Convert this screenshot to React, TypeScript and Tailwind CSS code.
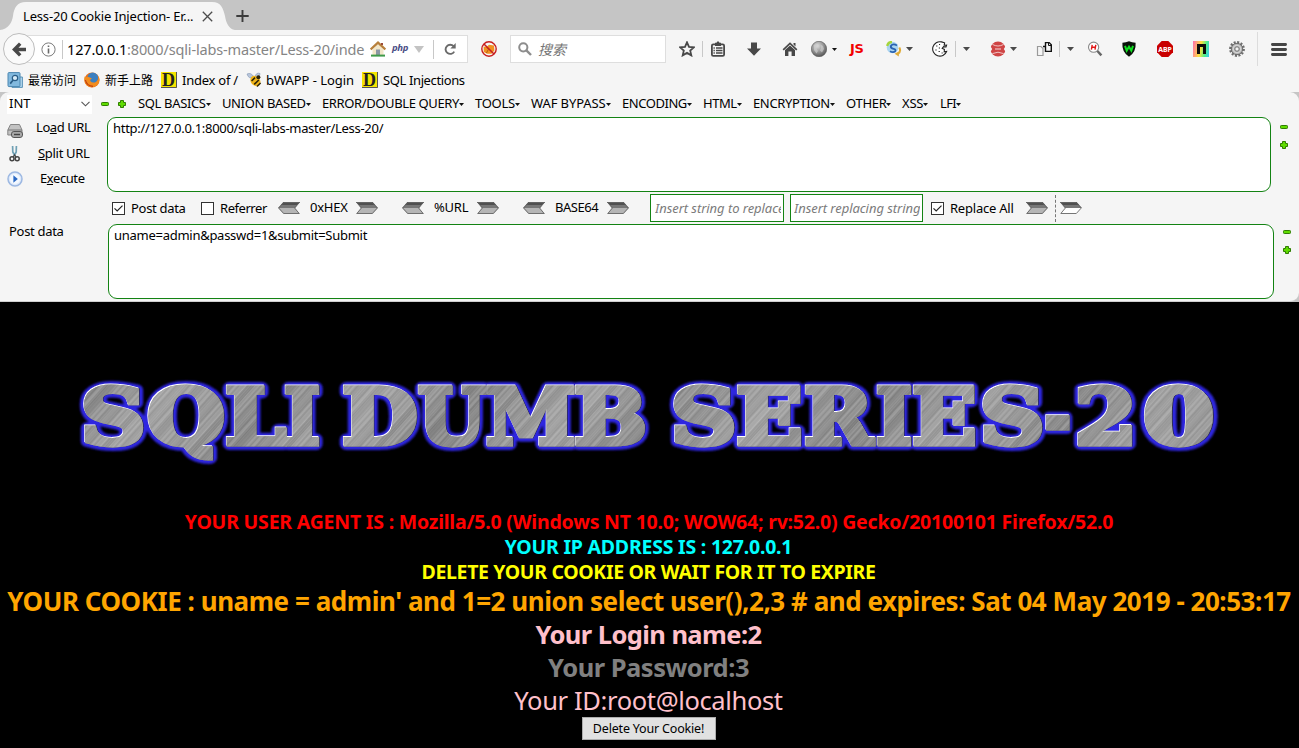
import React from "react";

const Caret = ({ className = "" }: { className?: string }) => (
  <svg className={`h-[4px] w-[7px] shrink-0 ${className}`} viewBox="0 0 7 4">
    <path d="M0 0H7L3.5 4Z" fill="#4a4a4a" />
  </svg>
);

const Sep = ({ className = "" }: { className?: string }) => <div className={`h-4 w-px shrink-0 bg-[#c8c8c8] ${className}`} />;

const Icon = ({ className = "", children }: { className?: string; children: React.ReactNode }) => (
  <svg className={`h-4 w-4 shrink-0 ${className}`} viewBox="0 0 16 16" fill="none">
    {children}
  </svg>
);

const Minus = ({ className = "" }: { className?: string }) => (
  <svg className={`h-2 w-2 shrink-0 ${className}`} viewBox="0 0 8 8">
    <rect x=".5" y="2.5" width="7" height="3" rx=".8" fill="#5fdc00" stroke="#2f7d00" />
  </svg>
);

const Plus = ({ className = "" }: { className?: string }) => (
  <svg className={`h-2 w-2 shrink-0 ${className}`} viewBox="0 0 8 8">
    <path d="M2.5 .5h3v2h2v3h-2v2h-3v-2h-2v-3h2Z" fill="#5fdc00" stroke="#2f7d00" strokeLinejoin="round" />
  </svg>
);

const Arrow = ({ className = "", flip = false, hollow = false }: { className?: string; flip?: boolean; hollow?: boolean }) => (
  <svg className={`h-[12px] w-[22px] shrink-0 ${flip ? "-scale-x-100" : ""} ${className}`} viewBox="0 0 22 12">
    <path d="M0 0H16.5L22 6L16.5 12H0L5 6Z" fill={hollow ? "#fff" : "#b5b5b5"} />
    <path d="M0 0H16.5L22 6H5Z" fill="#777" />
    <path d="M0 0H16.5L19.2 3H2.5Z" fill="#505050" />
    <path d="M.8 .5H16.3L21.3 6L16.3 11.5H.8L5.4 6Z" fill="none" stroke="#666" strokeWidth=".9" />
  </svg>
);

const Check = ({ on = false, className = "" }: { on?: boolean; className?: string }) => (
  <svg className={`h-[13px] w-[13px] shrink-0 ${className}`} viewBox="0 0 13 13">
    <rect x=".5" y=".5" width="12" height="12" fill="#fff" stroke="#333" />
    {on && <path d="M2.5 6.3L5.2 9L10.5 3.6" fill="none" stroke="#222" strokeWidth="1.2" />}
  </svg>
);

const BookmarkD = () => (
  <Icon>
    <rect width="16" height="16" fill="#f5e400" />
    <path d="M15.5 0V15.5H0" stroke="#555" />
    <text x="1" y="14" fontSize="18" fontWeight="700" fill="#222" fontFamily="Liberation Serif, serif">D</text>
  </Icon>
);

const menus: [string, string][] = [
  ["SQL BASICS", "w-[84px] tracking-[-0.35px]"],
  ["UNION BASED", "w-[100px] tracking-[-0.38px]"],
  ["ERROR/DOUBLE QUERY", "w-[153px] tracking-[-0.38px]"],
  ["TOOLS", "w-[56px] tracking-[-0.28px]"],
  ["WAF BYPASS", "w-[91px] tracking-[-0.1px]"],
  ["ENCODING", "w-[81px] tracking-[-0.45px]"],
  ["HTML", "w-[50px] tracking-[-0.45px]"],
  ["ENCRYPTION", "w-[93px] tracking-[-0.36px]"],
  ["OTHER", "w-[56px] tracking-[-0.3px]"],
  ["XSS", "w-[38px] tracking-[-0.2px]"],
  ["LFI", "w-[30px] tracking-[-0.6px]"],
];

function TabBar() {
  return (
    <div className="flex h-[30px] bg-[#c5c5c5]">
      <div className="relative flex h-[30px] w-[235px] items-center">
        <svg className="absolute inset-0 h-[30px] w-[235px]" viewBox="0 0 235 30">
          <path d="M0 30C8 29 12 23 13 16C14 8 17 2 26 2H212C221 2 223 8 225 16C226 23 229 29 235 30Z" fill="#f5f5f5" />
        </svg>
        <span className="relative ml-[23px] w-[179px] pt-px tracking-[-0.18px]">Less-20 Cookie Injection- Er...</span>
        <svg className="relative mt-[2px] h-[11px] w-[11px]" viewBox="0 0 11 11">
          <path d="M.8 .8L10.2 10.2M10.2 .8L.8 10.2" stroke="#4c4c4c" strokeWidth="1.3" />
        </svg>
      </div>
      <svg className="ml-px mt-[10px] h-3 w-[13px]" viewBox="0 0 13 12">
        <path d="M6.5 0V12M.3 6H12.7" stroke="#3c3c3c" strokeWidth="1.9" />
      </svg>
    </div>
  );
}

function NavBar() {
  return (
    <div className="flex h-[38px] items-center">
      <div className="z-10 ml-[3px] flex h-8 w-8 shrink-0 items-center justify-center rounded-full border border-[#bdbdbd] bg-[#fafafa]">
        <svg className="h-[15px] w-[15px]" viewBox="0 0 15 15">
          <path d="M8.2 1.6L2.4 7.5L8.2 13.4M2.8 7.5H14" fill="none" stroke="#484848" strokeWidth="3.4" />
        </svg>
      </div>
      <div className="ml-[-17px] flex h-[28px] w-[450px] items-center border border-[#dedede] bg-white pl-[22px]">
        <svg className="h-[15px] w-[15px] shrink-0" viewBox="0 0 15 15" fill="none">
          <circle cx="7.5" cy="7.5" r="6.6" stroke="#7b7b7b" />
          <path d="M7.5 6.5V11.5M7.5 3.4V5" stroke="#6a6a6a" strokeWidth="1.6" />
        </svg>
        <Sep className="ml-[6px] h-[19px]" />
        <div className="ml-[4px] w-[303px] shrink-0 whitespace-pre text-[14.5px] tracking-[-0.15px] text-[#858585]">
          <span className="text-black">127.0.0.1</span>:8000/sqli-labs-master/Less-20/inde
        </div>
        <Icon>
          <path d="M2.5 8.5L8 3L13.5 8.5V14.5H2.5Z" fill="#f2e6c8" />
          <path d="M.6 8.4L8 1.6L15.4 8.4" stroke="#b8803c" strokeWidth="2.3" />
          <path d="M12 2V4" stroke="#9a4a3a" strokeWidth="2" />
          <rect x="6" y="8.5" width="4" height="6" fill="#8c97a4" />
          <path d="M1 14.6H15" stroke="#3f9a4a" strokeWidth="2" />
        </Icon>
        <span className="ml-[6px] w-[17px] pb-[2px] text-[9.5px] font-bold italic leading-none tracking-[-0.3px] text-[#4b4f86]">php</span>
        <svg className="ml-[5px] h-[7px] w-[10px]" viewBox="0 0 10 7"><path d="M0 0H10L5 7Z" fill="#c3c3c3" /></svg>
        <Sep className="ml-[9px] h-[19px]" />
        <svg className="ml-[10px] h-3 w-3" viewBox="0 0 12 12" fill="none">
          <path d="M9.6 3.2A4.6 4.6 0 1 0 10.2 8.6" stroke="#6a6a6a" strokeWidth="1.9" />
          <path d="M11.7 0V5.4H6.4Z" fill="#6a6a6a" />
        </svg>
      </div>
      <Icon className="ml-[13px]">
        <path d="M2.6 5.5L5.5 6L8 3.8L13 4.4L13.4 9.5L10.5 12.8H6L2.8 11Z" fill="#f09020" />
        <path d="M5 5L7.5 8.2L5.4 12" stroke="#b45c10" />
        <circle cx="8" cy="8" r="7.2" stroke="#c81e1e" strokeWidth="1.4" />
        <path d="M3 3L13 13" stroke="#c81e1e" strokeWidth="1.5" />
      </Icon>
      <div className="ml-[13px] flex h-[28px] w-[156px] shrink-0 items-center border border-[#dedede] bg-white pl-[7px]">
        <svg className="h-[14px] w-[14px]" viewBox="0 0 14 14" fill="none">
          <circle cx="5.3" cy="5.3" r="4.1" stroke="#8d8d8d" strokeWidth="2" />
          <path d="M8.4 8.4L13 13" stroke="#8d8d8d" strokeWidth="2.4" />
        </svg>
        <span className="ml-[6px] pt-[2px] text-[14px] italic text-[#757575]">搜索</span>
      </div>
      <Icon className="ml-[13px]">
        <path d="M8 1.3L10 5.8L14.9 6.3L11.2 9.6L12.3 14.4L8 11.9L3.7 14.4L4.8 9.6L1.1 6.3L6 5.8Z" stroke="#484848" strokeWidth="1.8" />
      </Icon>
      <Sep className="ml-[7px]" />
      <Icon className="ml-[7px]">
        <rect x="1.9" y="3.3" width="12.2" height="11.6" rx="1.4" stroke="#484848" strokeWidth="1.8" />
        <path d="M5 1.8H6.4L8 0L9.6 1.8H11V5H5Z" fill="#484848" />
        <path d="M3.5 7H4.8M6 7H12.5M3.5 9.5H4.8M6 9.5H12.5M3.5 12H4.8M6 12H12.5" stroke="#484848" strokeWidth="1.3" />
      </Icon>
      <Icon className="ml-5"><path d="M5 1.5H11V7.5H15L8 14.7L1 7.5H5Z" fill="#484848" /></Icon>
      <Icon className="ml-5">
        <path d="M.6 8.2L8 1.2L15.4 8.2L14.2 9.4L8 3.6L1.8 9.4Z" fill="#484848" />
        <path d="M3 9L8 4.5L13 9V15H9.6V10.5H6.4V15H3ZM11.5 2H13.5V5.5L11.5 3.6Z" fill="#484848" />
      </Icon>
      <Icon className="ml-[13px]">
        <defs>
          <radialGradient id="globe" cx=".4" cy=".3" r=".75"><stop stopColor="#dedede" /><stop offset="1" stopColor="#505050" /></radialGradient>
        </defs>
        <circle cx="8" cy="8" r="7.7" fill="url(#globe)" stroke="#555" strokeWidth=".6" />
        <path d="M3 4L6 3L7.5 5L5.5 7.5L7 10L5.5 12.5L3 9ZM9.5 3.5L12 5L13 8L11 11.5L9 9.5L10 7Z" fill="#d0d0d0" opacity=".65" />
      </Icon>
      <svg className="ml-[5px] h-[3px] w-[5px]" viewBox="0 0 5 3"><path d="M0 0H5L2.5 3Z" fill="#111" /></svg>
      <span className="ml-[13px] w-[16px] pb-px text-[13px] font-extrabold leading-none text-[#f20000] [font-family:'DejaVu_Sans',sans-serif] tracking-[-0.4px]">JS</span>
      <Icon className="ml-5">
        <circle cx="6.5" cy="6.5" r="5.8" fill="#a9d4f0" />
        <path d="M1.2 5Q2 1 6 1" stroke="#a4d43c" strokeWidth="2.4" />
        <path d="M11 4.5Q7 2 4.8 5Q4.5 7.4 7.6 7.8Q10.5 8.4 9 10.6Q7 12 4 10.2" stroke="#2a62b0" strokeWidth="1.8" />
        <path d="M13.3 6.5Q15.5 10.5 11.8 13" stroke="#e0ac38" strokeWidth="2" />
        <path d="M8.6 12.8L12.8 10.4V15.4Z" fill="#e0ac38" />
      </Icon>
      <Caret className="ml-1" />
      <Icon className="ml-[19px]">
        <path d="M9.5 .9A7.2 7.2 0 1 0 14.6 10.5L12.2 10.8L12.4 8.4L10.2 7.4L11.6 5.6L14 6L14.6 4L12.2 4.2L12.6 1.8Z" fill="#fff" stroke="#222" strokeWidth="1.1" />
        <path d="M4.2 5h1.2M7 3.5h1.1M6.8 7h1.2M3.4 9h1.2M6.6 10.5h1.2M9.6 12h1.1" stroke="#222" strokeWidth="1.2" />
      </Icon>
      <Sep className="ml-[7px]" />
      <Caret className="ml-[7px]" />
      <Icon className="ml-5">
        <circle cx="8" cy="8" r="7.6" fill="#cf4545" />
        <path d="M2.4 3.4Q8 6.6 13.6 3.4M2.4 12.6Q8 9.8 13.6 12.6" stroke="#f0c4c4" />
        <path d="M5 8H11" stroke="#f6dada" />
        <path d="M0 4.5L2.2 8L0 11.5ZM16 4.5L13.8 8L16 11.5Z" fill="#f5f5f5" />
      </Icon>
      <Caret className="ml-1" />
      <Icon className="ml-[19px]">
        <path d="M1.5 5.5H5L7 7.5V14.5H1.5Z" stroke="#9a9a9a" strokeWidth="1.2" />
        <path d="M9.5 1.6H13.2L15.3 3.7V10.4H9.5ZM7 5.5H9.5" stroke="#111" strokeWidth="1.4" />
        <path d="M12.5 1V4.5H15.5" stroke="#111" />
      </Icon>
      <Sep className="ml-[7px]" />
      <Caret className="ml-[7px]" />
      <Icon className="ml-[13px]">
        <circle cx="6.6" cy="6.2" r="5.1" fill="#fff" stroke="#8a8a8a" strokeWidth="1.1" />
        <path d="M10.4 10L14.4 14.4" stroke="#666" strokeWidth="2.4" />
        <path d="M5.2 3.8L4.4 8.6M8.8 3.8L8 8.6M5 6.2H8.3" stroke="#e01818" strokeWidth="1.4" />
      </Icon>
      <Icon className="ml-[18px]">
        <path d="M8 .2Q11 1.6 14.6 1.8Q15.4 11 8 15.8Q.6 11 1.4 1.8Q5 1.6 8 .2Z" fill="#0a120a" />
        <path d="M4 4.8L5.7 9.6L8 5.8L10.3 9.6L12 4.8" stroke="#10e020" strokeWidth="2" />
      </Icon>
      <Icon className="ml-5">
        <path d="M4.7 0H11.3L16 4.7V11.3L11.3 16H4.7L0 11.3V4.7Z" fill="#c90000" />
        <text x="1.2" y="10.8" fontSize="7.6" fontWeight="700" fill="#fff" textLength="13.6" lengthAdjust="spacingAndGlyphs" fontFamily="Noto Sans">ABP</text>
      </Icon>
      <div className="ml-5 flex h-4 w-4 shrink-0 items-center justify-center bg-[linear-gradient(100deg,#ff6bb0,#ffe23c_45%,#4cf08a_75%,#38c4f4)]">
        <svg className="h-[10px] w-[9px]" viewBox="0 0 9 10"><path d="M0 0H9V10H6V3H3V10H0Z" fill="#0c0c0c" /></svg>
      </div>
      <Icon className="ml-5">
        <circle cx="8" cy="8" r="6.6" stroke="#6c6c6c" strokeWidth="2.6" strokeDasharray="2 1.45" />
        <circle cx="8" cy="8" r="5.7" fill="#b5b5b5" stroke="#6a6a6a" />
        <circle cx="8" cy="8" r="3.8" stroke="#dadada" />
        <circle cx="8" cy="8" r="2.2" fill="#f2f2f2" stroke="#747474" />
      </Icon>
      <Sep className="ml-3 h-[34px] bg-[#dcdcdc]" />
      <svg className="ml-[13px] h-[13px] w-4" viewBox="0 0 16 13">
        <path d="M1.4 1.5H14.6M1.4 6.5H14.6M1.4 11.5H14.6" stroke="#454545" strokeWidth="2.8" strokeLinecap="round" />
      </svg>
    </div>
  );
}

function Bookmarks() {
  return (
    <div className="flex h-6 items-center pl-[7px] tracking-[-0.25px]">
      <Icon>
        <path d="M13 5H15.4V15.4H5V13" fill="#b6d8ee" stroke="#5b93b8" />
        <rect x="1" y=".6" width="12" height="14" rx="1" fill="#82b9de" stroke="#4a86b0" />
        <circle cx="8" cy="6" r="2.7" fill="#d7ecf8" stroke="#2a5d86" strokeWidth="1.2" />
        <path d="M6 8.3L3.2 11.6" stroke="#2a5d86" strokeWidth="1.7" />
      </Icon>
      <span className="ml-[5px] w-[51px] pt-px text-[12px] tracking-normal">最常访问</span>
      <Icon className="ml-[5px]">
        <circle cx="8" cy="8" r="7.6" fill="#e8701a" />
        <circle cx="8.8" cy="6" r="5.4" fill="#3b7fc0" />
        <path d="M.6 4.5Q2 5.5 3.6 4.8Q6 5.4 8 6.6Q6 7.2 6.2 9Q8.5 11.5 12 10Q15 8 14.2 3.5Q17 9 13 13.2Q8 17 3 13.5Q-.8 9.8 .6 4.5Z" fill="#f28c1e" />
        <path d="M1.4 8Q2.6 13.8 9 14.4" stroke="#c23d10" strokeWidth="1.2" />
      </Icon>
      <span className="ml-[5px] w-[51px] pt-px text-[12px] tracking-normal">新手上路</span>
      <span className="ml-[5px] flex"><BookmarkD /></span>
      <span className="ml-[5px] w-[59px]">Index of /</span>
      <Icon className="ml-[5px]">
        <path d="M1 2Q5 0 8 5Q3 8 1 2ZM9 5Q10 0 14 1.5Q14 5 9 5Z" fill="#b9c6da" stroke="#8094b4" strokeWidth=".6" />
        <ellipse cx="9.4" cy="9" rx="5.6" ry="4.6" transform="rotate(48 9.4 9)" fill="#f0b418" />
        <path d="M5.6 9L9 5.6M8.2 12.4L12.8 8" stroke="#2c2408" strokeWidth="1.6" />
        <path d="M11 14.6L14.6 11" stroke="#2c2408" strokeWidth="1.4" />
        <circle cx="12.4" cy="5.2" r="2" fill="#2c2408" />
      </Icon>
      <span className="ml-[4px] w-[91px] tracking-[-0.05px]">bWAPP - Login</span>
      <span className="ml-[5px] flex"><BookmarkD /></span>
      <span className="ml-[5px] tracking-[-0.38px]">SQL Injections</span>
    </div>
  );
}

function HackBar() {
  return (
    <div className="bg-[#c5c5c5]">
      <div className="flex h-[210px] flex-col rounded-[9px] rounded-bl-none border-b border-[#cfcfcf] bg-[#f5f5f5]">
        <div className="flex h-6 items-center">
          <div className="ml-[7px] flex h-[19px] w-[85px] items-center justify-between bg-white pl-[2px] pr-[2px]">
            <span className="pb-[2px]">INT</span>
            <svg className="h-[6px] w-[9px]" viewBox="0 0 9 6"><path d="M.5 .8L4.5 4.8L8.5 .8" fill="none" stroke="#555" strokeWidth="1.1" /></svg>
          </div>
          <Minus className="ml-[9px]" />
          <Plus className="ml-[9px]" />
          <div className="ml-[12px] flex pb-[2px]">
            {menus.map(([label, cls]) => (
              <div key={label} className={`flex items-center whitespace-nowrap ${cls}`}>
                {label}
                <svg className="mt-[3px] h-[3px] w-[5px] shrink-0" viewBox="0 0 5 3"><path d="M0 0H5L2.5 3Z" fill="#111" /></svg>
              </div>
            ))}
          </div>
        </div>
        <div className="flex h-[77px] pt-px">
          <div className="w-[107px] pl-[7px] tracking-[-0.42px]">
            <div className="flex h-[23px] items-center">
              <Icon className="mt-1">
                <path d="M3.5 1.5H12.5L15 7V12H.8V7Z" fill="#c2c2c2" stroke="#858585" />
                <path d="M1 7H15" stroke="#777" />
                <rect x="4.5" y="8.5" width="11" height="6" rx="2.4" fill="#a8a8a8" stroke="#555" />
                <path d="M7 11.5H13" stroke="#444" strokeWidth="1.4" />
              </Icon>
              <span className="ml-[13px] pb-[3px]">Lo<u>a</u>d URL</span>
            </div>
            <div className="flex h-[27px] items-center">
              <Icon className="h-[18px]">
                <path d="M5.6 0L5.8 6L8 10M9.4 0L9.2 6L7 10" stroke="#6fa0b4" strokeWidth="1.7" />
                <circle cx="5" cy="12.8" r="2" stroke="#444" strokeWidth="1.5" />
                <circle cx="10.2" cy="12.8" r="2" stroke="#444" strokeWidth="1.5" />
                <path d="M6.2 11L7.6 9L9 11" stroke="#444" strokeWidth="1.3" />
              </Icon>
              <span className="ml-[15px] pb-[2px] tracking-[-0.3px]"><u>S</u>plit URL</span>
            </div>
            <div className="flex h-[25px] items-center">
              <Icon className="mb-[2px]">
                <circle cx="8" cy="8" r="7" fill="#dfeafa" stroke="#9cb8e2" strokeWidth="1.5" />
                <circle cx="8" cy="8" r="5" fill="#f4f9ff" />
                <path d="M6.4 4.2L10.8 8L6.4 11.8Z" fill="#2a68c4" />
              </Icon>
              <span className="ml-[17px] pb-[3px]">E<u>x</u>ecute</span>
            </div>
          </div>
          <div className="h-[75px] w-[1164px] rounded-[9px] border border-[#138313] bg-white pl-[5px] pt-px leading-[18px] tracking-[-0.3px]">
            http://127.0.0.1:8000/sqli-labs-master/Less-20/
          </div>
          <div className="ml-[9px] flex w-2 flex-col gap-[10px] pt-[6px]"><Minus /><Plus /></div>
        </div>
        <div className="flex h-[31px] items-center pb-px tracking-[-0.25px]">
          <Check on className="ml-[112px] mt-px" />
          <span className="ml-[6px] w-[70px] tracking-[-0.3px]">Post data</span>
          <Check className="mt-px" />
          <span className="ml-[6px] w-[58px] tracking-[-0.45px]">Referrer</span>
          <Arrow flip />
          <span className="ml-[10px] w-[46px] pb-[2px]">0xHEX</span>
          <Arrow />
          <Arrow flip className="ml-[24px]" />
          <span className="ml-[10px] w-[43px] pb-[2px]">%URL</span>
          <Arrow />
          <Arrow flip className="ml-[24px]" />
          <span className="ml-[10px] w-[52px] pb-[2px] tracking-[-0.45px]">BASE64</span>
          <Arrow />
          <div className="ml-[21px] h-7 w-[134px] shrink-0 overflow-hidden border border-[#138313] bg-white pl-[4px] pr-[2px] italic leading-[27px] tracking-[-0.05px] text-[#7b7b7b]"><div className="overflow-hidden whitespace-nowrap">Insert string to replace</div></div>
          <div className="ml-[6px] h-7 w-[133px] shrink-0 overflow-hidden border border-[#138313] bg-white pl-[3px] pr-[2px] italic leading-[27px] tracking-[-0.05px] text-[#7b7b7b]"><div className="overflow-hidden whitespace-nowrap">Insert replacing string</div></div>
          <Check on className="ml-[8px] mt-px" />
          <span className="ml-[6px] w-[76px] tracking-[-0.22px]">Replace All</span>
          <Arrow />
          <div className="ml-[7px] h-[27px] border-l border-dashed border-[#777]" />
          <Arrow hollow className="ml-[4px]" />
        </div>
        <div className="flex flex-1">
          <div className="w-[108px] pl-[9px] leading-[14px] tracking-[-0.3px]">Post data</div>
          <div className="h-[75px] w-[1166px] rounded-[9px] border border-[#138313] bg-white pl-[5px] pt-px leading-[18px] tracking-[-0.27px]">
            uname=admin&amp;passwd=1&amp;submit=Submit
          </div>
          <div className="ml-[9px] flex w-2 flex-col gap-[10px] pt-[4px]"><Minus /><Plus /></div>
        </div>
      </div>
    </div>
  );
}

const glyphs: [string, number, number][] = [
  ["S", 84, 144], ["Q", 148, 224], ["L", 226, 287], ["I", 285, 320],
  ["D", 343, 417], ["U", 418, 487], ["M", 487, 575], ["B", 575, 646],
  ["S", 674, 735], ["E", 737, 802], ["R", 805, 876], ["I", 877, 912], ["E", 913, 976],
  ["S", 983, 1043], ["-", 1046, 1070], ["2", 1078, 1133], ["0", 1144, 1214],
];
const SIZE = 76;
const BASE = 141.5;
const FAT = 5;

/* Horizontal stretch that makes a glyph's ink, outline included, run from x0 to x1. */
function fitGlyph(ctx: CanvasRenderingContext2D, ch: string, x0: number, x1: number) {
  const m = ctx.measureText(ch);
  const ink = m.actualBoundingBoxRight + m.actualBoundingBoxLeft;
  const sx = (x1 - x0) / (ink + FAT);
  return `translate(${x0 + (FAT / 2 + m.actualBoundingBoxLeft) * sx} ${BASE}) scale(${sx} 1)`;
}

function Banner() {
  const ctx = document.createElement("canvas").getContext("2d")!;
  ctx.font = `bold ${SIZE}px "DejaVu Serif"`;
  const streaks = Array.from({ length: 90 }, (_, i) => ({ y: i * 0.75, g: 108 + ((i * 73 + ((i * i * 31) % 47)) % 52) }));
  return (
    <svg className="block h-[207px] w-[1299px]" viewBox="0 0 1299 207">
      <defs>
        <g id="word" fontFamily="DejaVu Serif, serif" fontWeight="700" fontSize={SIZE}>
          {glyphs.map(([ch, x0, x1], i) => (
            <text key={i} transform={fitGlyph(ctx, ch, x0, x1)}>{ch}</text>
          ))}
        </g>
        <pattern id="brush" width="90" height="67.5" patternUnits="userSpaceOnUse" patternTransform="rotate(-48)">
          {streaks.map(({ y, g }) => (
            <rect key={y} y={y} width="90" height=".8" fill={`rgb(${g},${g},${g})`} />
          ))}
        </pattern>
        <linearGradient id="sheen" gradientUnits="userSpaceOnUse" x1="80" x2="200" y1="80" y2="180" spreadMethod="reflect">
          <stop stopColor="#fff" stopOpacity=".04" /><stop offset=".5" stopColor="#fff" stopOpacity=".26" /><stop offset="1" stopColor="#fff" stopOpacity=".08" />
        </linearGradient>
        <filter id="soft" x="-5%" y="-20%" width="110%" height="140%"><feGaussianBlur stdDeviation="1.3" /></filter>
        <mask id="cut" maskUnits="userSpaceOnUse" x="0" y="0" width="1299" height="207">
          <use href="#word" fill="#fff" stroke="#fff" strokeWidth={FAT} />
        </mask>
      </defs>
      <use href="#word" fill="#2f25e0" stroke="#2f25e0" strokeWidth={FAT + 7} strokeLinejoin="round" filter="url(#soft)" />
      <use href="#word" fill="#2c2c50" stroke="#2c2c50" strokeWidth={FAT} x=".8" y=".8" />
      <use href="#word" fill="#fff" stroke="#fff" strokeWidth={FAT} x="-.8" y="-.8" />
      <use href="#word" fill="#8a8a8a" stroke="#8a8a8a" strokeWidth={FAT} />
      <g mask="url(#cut)">
        <rect width="1299" height="207" fill="url(#brush)" />
        <rect width="1299" height="207" fill="url(#sheen)" />
      </g>
    </svg>
  );
}

export default function App() {
  return (
    <div className="h-[748px] w-[1299px] overflow-hidden bg-[#f5f5f5] text-[13px] leading-[18px] text-black [font-family:'Noto_Sans','Noto_Sans_CJK_SC',sans-serif]">
      <TabBar />
      <NavBar />
      <Bookmarks />
      <HackBar />
      <div className="flex h-[446px] flex-col items-center whitespace-nowrap bg-black font-bold">
        <Banner />
        <div className="pr-px text-[19.5px] leading-[25px] tracking-[-0.21px] text-[#ff0000]">YOUR USER AGENT IS : Mozilla/5.0 (Windows NT 10.0; WOW64; rv:52.0) Gecko/20100101 Firefox/52.0</div>
        <div className="pr-[2px] text-[19.5px] leading-[25px] tracking-[-0.22px] text-[#00ffff]">YOUR IP ADDRESS IS : 127.0.0.1</div>
        <div className="pr-[2px] text-[19.5px] leading-[25px] tracking-[-0.35px] text-[#ffff00]">DELETE YOUR COOKIE OR WAIT FOR IT TO EXPIRE</div>
        <div className="pr-px text-[26px] leading-[34px] tracking-[-0.46px] text-[#ffa500]">YOUR COOKIE : uname = admin' and 1=2 union select user(),2,3 # and expires: Sat 04 May 2019 - 20:53:17</div>
        <div className="pr-[2px] text-[25.5px] leading-[33px] tracking-[-0.58px] text-[#ffc0cb]">Your Login name:2</div>
        <div className="pr-[2px] text-[25.5px] leading-[33px] tracking-[-0.5px] text-[#808080]">Your Password:3</div>
        <div className="pr-[2px] text-[25.5px] font-normal leading-[33px] tracking-[-0.36px] text-[#ffc0cb]">Your ID:root@localhost</div>
        <button className="mr-[2px] flex h-[23px] w-[134px] items-center justify-center border border-[#adadad] bg-[#e1e1e1] pt-px text-[12.5px] font-normal tracking-[-0.18px] text-black">Delete Your Cookie!</button>
      </div>
    </div>
  );
}
